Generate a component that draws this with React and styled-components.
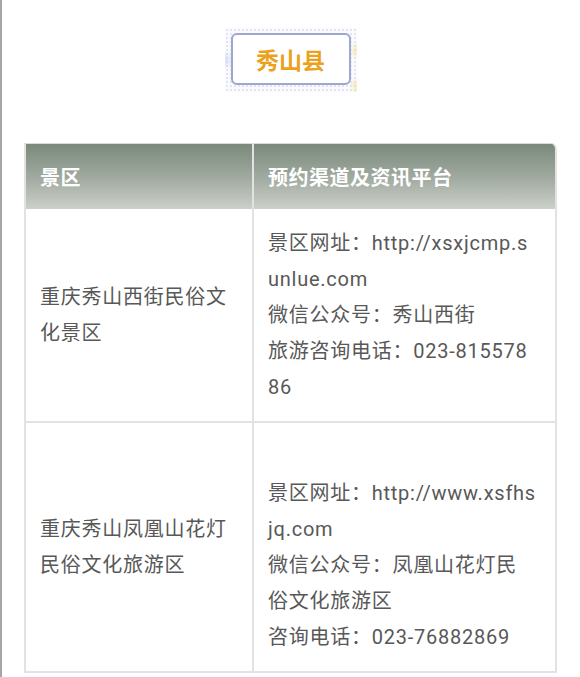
import styled, { createGlobalStyle } from 'styled-components';

const GlobalStyle = createGlobalStyle`
	html, body {
		margin: 0;
		padding: 0;
		background: #fff;
	}
	body {
		font-family: Roboto, "Noto Sans CJK SC", sans-serif;
	}
`

const Page = styled.div`
	min-height: 677px;
	box-sizing: border-box;
	border-left: 2px solid #a6a6a6;
	padding: 28px 23px 0 22px;
`

const BadgeWrap = styled.div`
	display: flex;
	justify-content: center;
	margin-bottom: 51px;
`

const BadgeFrame = styled.div`
	padding: 5px 6px 7px 6px;
	background:
		radial-gradient(circle at 100% 35%, rgba(245, 226, 160, 0.7) 0, rgba(245, 226, 160, 0) 9px),
		radial-gradient(circle at 100% 90%, rgba(245, 226, 160, 0.7) 0, rgba(245, 226, 160, 0) 9px),
		radial-gradient(circle at 0% 50%, rgba(200, 205, 240, 0.6) 0, rgba(200, 205, 240, 0) 10px),
		radial-gradient(circle, #e2e5f4 1px, transparent 1.4px) 0 0 / 4px 4px,
		#fbfbfe;
`

const Badge = styled.div`
	width: 116px;
	height: 48px;
	display: flex;
	align-items: center;
	justify-content: center;
	background: #fff;
	border: 2px solid #9ea6d2;
	border-radius: 6px;
	color: #eba11b;
	font-size: 23px;
	font-weight: 700;
	font-family: "Noto Sans CJK SC", sans-serif;
`

const Table = styled.table`
	width: 533px;
	border-collapse: separate;
	border-spacing: 0;
	table-layout: fixed;
	font-size: 20px;
	line-height: 36px;
	letter-spacing: 0.75px;
	color: #585858;
`

const HeadCell = styled.th`
	height: 66px;
	padding: 0 15px 0 14px;
	box-sizing: border-box;
	text-align: left;
	color: #fff;
	font-weight: 700;
	font-size: 20px;
	letter-spacing: 0.5px;
	font-family: "Noto Sans CJK SC", sans-serif;
	background: linear-gradient(to bottom, #7a897c 0%, #a3aca2 55%, #ccd0ca 100%);
	border-top: 1px solid #d8dbd7;
	border-left: 2px solid #e2e2e2;
	border-right: ${p => (p.$last ? '2px solid #e2e2e2' : '0')};
	border-top-right-radius: ${p => (p.$last ? '6px' : '0')};
`

const Cell = styled.td`
	padding: 16px 15px 16px 14px;
	vertical-align: middle;
	word-break: break-all;
	border-left: 2px solid #e2e2e2;
	border-bottom: 2px solid #e2e2e2;
	border-right: ${p => (p.$last ? '2px solid #e2e2e2' : '0')};
`

const Line = styled.div`
	min-height: 36px;
	white-space: nowrap;
`

const rows = [
	{
		name: '重庆秀山西街民俗文化景区',
		info: [
			'景区网址：http://xsxjcmp.s',
			'unlue.com',
			'微信公众号：秀山西街',
			'旅游咨询电话：023-815578',
			'86',
		],
	},
	{
		name: '重庆秀山凤凰山花灯民俗文化旅游区',
		info: [
			'',
			'景区网址：http://www.xsfhs',
			'jq.com',
			'微信公众号：凤凰山花灯民',
			'俗文化旅游区',
			'咨询电话：023-76882869',
		],
	},
]

const App = () => {
	return (
		<>
			<GlobalStyle />
			<Page>
				<BadgeWrap>
					<BadgeFrame>
						<Badge>秀山县</Badge>
					</BadgeFrame>
				</BadgeWrap>
				<Table>
					<colgroup>
						<col style={{ width: '228px' }} />
						<col />
					</colgroup>
					<thead>
						<tr>
							<HeadCell>景区</HeadCell>
							<HeadCell $last>预约渠道及资讯平台</HeadCell>
						</tr>
					</thead>
					<tbody>
						{rows.map(row => (
							<tr key={row.name}>
								<Cell>{row.name}</Cell>
								<Cell $last>
									{row.info.map((line, i) => (
										<Line key={i}>{line}</Line>
									))}
								</Cell>
							</tr>
						))}
					</tbody>
				</Table>
			</Page>
		</>
	)
}

export default App;
